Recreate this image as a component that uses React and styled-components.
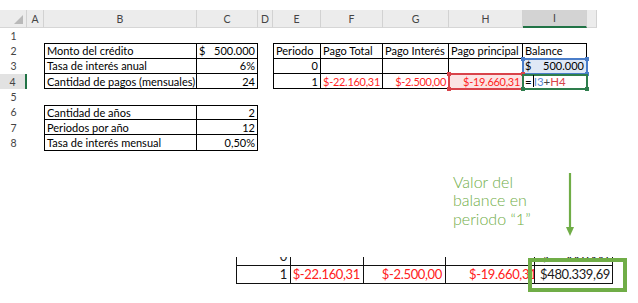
import React from 'react'
import styled, { createGlobalStyle } from 'styled-components'

const GlobalStyle = createGlobalStyle`
  body {
    margin: 0;
    background: #fff;
  }
`

const Page = styled.div`
  width: 638px;
  height: 303px;
  overflow: hidden;
  padding-top: 10px;
  box-sizing: border-box;
  font-family: Lato, "Liberation Sans", sans-serif;
`

const Sheet = styled.div`
  display: grid;
  grid-template-columns: 27px 17px 153px 61px 15px 48px 62px 66px 74px 64px 10px;
  grid-template-rows: 18px repeat(8, 15.33px);
  font-size: 11px;
  color: #000;
`

const ColHead = styled.div`
  grid-row: 1;
  background: ${props => (props.$active ? '#d3d3d3' : '#ececec')};
  border-right: 1px solid #d2d2d2;
  border-bottom: ${props => (props.$active ? '2px solid #217346' : '1px solid #d6d6d6')};
  box-sizing: border-box;
  display: flex;
  align-items: center;
  justify-content: center;
  color: #444;
  font-size: 10.5px;
`

const Corner = styled(ColHead)`
  justify-content: flex-end;
  align-items: flex-end;
  padding: 0 3px 3px 0;
`

const RowHead = styled.div`
  grid-column: 1;
  grid-row: ${props => props.$row};
  background: ${props => (props.$active ? '#e2e2e2' : '#fff')};
  border-right: ${props => (props.$active ? '2px solid #217346' : 'none')};
  box-sizing: border-box;
  display: flex;
  align-items: center;
  justify-content: center;
  color: #444;
  font-size: 10.5px;
`

const Cell = styled.div`
  grid-column: ${props => props.$col};
  grid-row: ${props => props.$row};
  position: relative;
  box-sizing: border-box;
  border-right: 1px solid #000;
  border-bottom: 1px solid #000;
  border-top: ${props => (props.$top ? '1px solid #000' : 'none')};
  border-left: ${props => (props.$left ? '1px solid #000' : 'none')};
  display: flex;
  align-items: center;
  justify-content: ${props => (props.$right ? 'flex-end' : 'space-between')};
  padding: 0 2px;
  white-space: nowrap;
  color: ${props => (props.$red ? '#ff1f1f' : '#000')};
  letter-spacing: ${props => (props.$red ? '-0.3px' : 'normal')};
`

const Ref = styled.div`
  position: absolute;
  left: -1px;
  right: -2px;
  top: ${props => props.$up || '-1px'};
  bottom: -2px;
  border: 2px solid ${props => props.$color};
  background: ${props => props.$fill};
  box-sizing: border-box;
  pointer-events: none;
`

const Handle = styled.span`
  position: absolute;
  width: 4px;
  height: 4px;
  background: ${props => props.$color};
  left: ${props => (props.$x === 'l' ? '-3px' : 'auto')};
  right: ${props => (props.$x === 'r' ? '-3px' : 'auto')};
  top: ${props => (props.$y === 't' ? '-3px' : 'auto')};
  bottom: ${props => (props.$y === 'b' ? '-3px' : 'auto')};
`

const Value = styled.span`
  position: relative;
`

const Formula = styled.span`
  position: relative;
  display: flex;
  align-items: center;
  color: #000;
  font-size: 11.5px;
`

const Caret = styled.span`
  display: inline-block;
  width: 1px;
  height: 12px;
  background: #000;
  margin: 0 0 0 1px;
`

const Tok = styled.span`
  color: ${props => props.$color};
`

const Lower = styled.div`
  display: flex;
  margin-top: 22px;
  padding-left: 453px;
`

const Note = styled.div`
  width: 112px;
  font-family: Lato, "Open Sans", sans-serif;
  font-weight: 300;
  font-size: 16px;
  line-height: 18.5px;
  color: #70ad47;
`

const ZoomWrap = styled.div`
  position: relative;
  margin: 20px 0 0 236px;
  width: 377px;
  font-size: 13px;
  letter-spacing: -0.35px;
`

const Clip = styled.div`
  height: 9px;
  overflow: hidden;
  display: flex;
  flex-direction: column;
  justify-content: flex-end;
`

const ZoomRow = styled.div`
  display: grid;
  grid-template-columns: 55px 73px 82px 89px 78px;
  height: 18px;
  flex-shrink: 0;
`

const ZCell = styled.div`
  box-sizing: border-box;
  border-right: 1px solid #111;
  border-bottom: 1px solid #111;
  border-left: ${props => (props.$left ? '1px solid #111' : 'none')};
  display: flex;
  align-items: center;
  justify-content: ${props => props.$align || 'flex-end'};
  padding: ${props => props.$pad || '0 3px'};
  overflow: hidden;
  white-space: nowrap;
  color: ${props => (props.$red ? '#ff2020' : '#1a1a1a')};
`

const Highlight = styled.div`
  position: absolute;
  left: 292px;
  top: 1px;
  width: 99px;
  height: 34px;
  border: 4px solid #70ad47;
  box-sizing: border-box;
`

const cols = ['A', 'B', 'C', 'D', 'E', 'F', 'G', 'H', 'I', '']

const DownArrow = () => (
  <svg width="10" height="64" viewBox="0 0 10 64">
    <line x1="5" y1="0" x2="5" y2="55" stroke="#70ad47" strokeWidth="2.2" />
    <polygon points="1,54 9,54 5,63" fill="#70ad47" />
  </svg>
)

const Selection = ({ color, fill, corners, up }) => (
  <Ref $color={color} $fill={fill} $up={up}>
    {corners.map(c => (
      <Handle key={c} $color={color} $x={c[1]} $y={c[0]} />
    ))}
  </Ref>
)

const App = () => (
  <Page>
    <GlobalStyle />
    <Sheet>
      <Corner>
        <svg width="9" height="9" viewBox="0 0 9 9">
          <polygon points="9,0 9,9 0,9" fill="#b9b9b9" />
        </svg>
      </Corner>
      {cols.map((c, i) => (
        <ColHead key={i} $active={c === 'I'}>{c}</ColHead>
      ))}
      {[1, 2, 3, 4, 5, 6, 7, 8].map(r => (
        <RowHead key={r} $row={r + 1} $active={r === 4}>{r}</RowHead>
      ))}

      <Cell $col={3} $row={3} $top $left>Monto del crédito</Cell>
      <Cell $col={4} $row={3} $top><span>$</span><span>500.000</span></Cell>
      <Cell $col={3} $row={4} $left>Tasa de interés anual</Cell>
      <Cell $col={4} $row={4} $right>6%</Cell>
      <Cell $col={3} $row={5} $left>Cantidad de pagos (mensuales)</Cell>
      <Cell $col={4} $row={5} $right>24</Cell>

      <Cell $col={3} $row={7} $top $left>Cantidad de años</Cell>
      <Cell $col={4} $row={7} $top $right>2</Cell>
      <Cell $col={3} $row={8} $left>Periodos por año</Cell>
      <Cell $col={4} $row={8} $right>12</Cell>
      <Cell $col={3} $row={9} $left>Tasa de interés mensual</Cell>
      <Cell $col={4} $row={9} $right>0,50%</Cell>

      <Cell $col={6} $row={3} $top $left>Periodo</Cell>
      <Cell $col={7} $row={3} $top>Pago Total</Cell>
      <Cell $col={8} $row={3} $top>Pago Interés</Cell>
      <Cell $col={9} $row={3} $top>Pago principal</Cell>
      <Cell $col={10} $row={3} $top>Balance</Cell>

      <Cell $col={6} $row={4} $left $right>0</Cell>
      <Cell $col={7} $row={4} />
      <Cell $col={8} $row={4} />
      <Cell $col={9} $row={4} />
      <Cell $col={10} $row={4}>
        <Selection color="#4a7dc9" fill="#dfe8f6" corners={['tl', 'tr', 'bl', 'br']} />
        <Value>$</Value>
        <Value>500.000</Value>
      </Cell>

      <Cell $col={6} $row={5} $left $right>1</Cell>
      <Cell $col={7} $row={5} $right $red>$-22.160,31</Cell>
      <Cell $col={8} $row={5} $right $red>$-2.500,00</Cell>
      <Cell $col={9} $row={5} $right $red>
        <Selection color="#d9434a" fill="#fbe4e4" corners={['tl', 'tr', 'bl', 'br']} />
        <Value>$-19.660,31</Value>
      </Cell>
      <Cell $col={10} $row={5}>
        <Selection color="#2e7d4c" fill="transparent" up="0px" corners={['bl', 'br']} />
        <Formula>
          =<Caret />
          <Tok $color="#5b8ad8">I3</Tok>
          <Tok $color="#444">+</Tok>
          <Tok $color="#d9434a">H4</Tok>
        </Formula>
      </Cell>
    </Sheet>

    <Lower>
      <Note>
        Valor del
        <br />
        balance en
        <br />
        periodo “1”
      </Note>
      <DownArrow />
    </Lower>

    <ZoomWrap>
      <Clip>
        <ZoomRow>
          <ZCell $left>0</ZCell>
          <ZCell />
          <ZCell />
          <ZCell />
          <ZCell $align="space-between" $pad="0 4px 0 6px">
            <span>$</span>
            <span>500.000</span>
          </ZCell>
        </ZoomRow>
      </Clip>
      <ZoomRow>
        <ZCell $left>1</ZCell>
        <ZCell $red>$-22.160,31</ZCell>
        <ZCell $red>$-2.500,00</ZCell>
        <ZCell $red $align="flex-start" $pad="0 0 0 23px">$-19.660,31</ZCell>
        <ZCell $align="space-between" $pad="0 4px 0 5px">
          <span>$</span>
          <span>480.339,69</span>
        </ZCell>
      </ZoomRow>
      <Highlight />
    </ZoomWrap>
  </Page>
)

export default App
